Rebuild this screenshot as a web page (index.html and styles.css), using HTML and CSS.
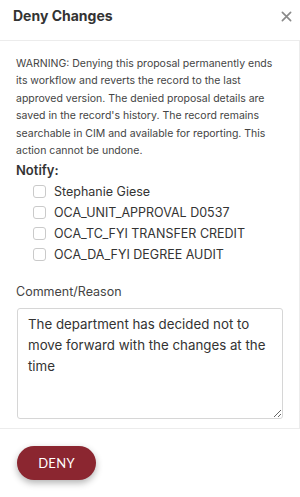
FILE: index.html
```html
<!DOCTYPE html>
<html lang="en">
<head>
  <meta charset="UTF-8" />
  <meta name="viewport" content="width=device-width, initial-scale=1.0"/>
  <title>Deny Changes</title>
  <link rel="stylesheet" href="styles.css">
</head>
<body>
<div class="modal">
  <div class="modal-header">
    <div class="modal-title">Deny Changes</div>
    <div class="close-btn">
      <svg width="11" height="11" viewBox="0 0 12 12"><path d="M1.5 1.5 L10.5 10.5 M10.5 1.5 L1.5 10.5" stroke="#8a8a8a" stroke-width="1.8" stroke-linecap="round"/></svg>
    </div>
  </div>
  <div class="modal-body">
    <p class="warning">WARNING: Denying this proposal permanently ends its workflow and reverts the record to the last approved version. The denied proposal details are saved in the record's history. The record remains searchable in CIM and available for reporting. This action cannot be undone.</p>
    <div class="notify-label">Notify:</div>
    <div class="notify-list">
      <label class="check"><span class="box"></span>Stephanie Giese</label>
      <label class="check"><span class="box"></span>OCA_UNIT_APPROVAL D0537</label>
      <label class="check"><span class="box"></span>OCA_TC_FYI TRANSFER CREDIT</label>
      <label class="check"><span class="box"></span>OCA_DA_FYI DEGREE AUDIT</label>
    </div>
    <div class="comment-label">Comment/Reason</div>
    <textarea class="comment">The department has decided not to move forward with the changes at the time</textarea>
  </div>
  <div class="modal-footer">
    <button class="deny-btn">DENY</button>
  </div>
</div>
</body>
</html>
```

FILE: styles.css
```css
body {
  margin: 0;
  background: #fff;
  font-family: 'Inter', 'Helvetica Neue', sans-serif;
  color: #333;
}
.modal {
  width: 300px;
  height: 497px;
  display: flex;
  flex-direction: column;
  overflow: hidden;
}
.modal-header {
  height: 41px;
  display: flex;
  align-items: flex-start;
  justify-content: space-between;
  padding: 7px 4px 0 13px;
  box-sizing: border-box;
  border-bottom: 1px solid #ececec;
}
.modal-title {
  font-size: 14px;
  font-weight: 700;
  color: #333;
}
.close-btn {
  width: 20px;
  height: 20px;
  display: flex;
  align-items: center;
  justify-content: center;
  margin-top: -1px;
}
.modal-body {
  height: 388px;
  flex-shrink: 0;
  box-sizing: border-box;
  padding: 14px 16px 0 16px;
  border-right: 1px solid #ececec;
  border-bottom: 1px solid #ececec;
}
.warning {
  margin: 0;
  font-size: 10.5px;
  line-height: 17.4px;
  color: #444;
}
.notify-label {
  font-size: 13px;
  font-weight: 600;
  color: #333;
  margin-top: 3px;
}
.notify-list {
  display: flex;
  flex-direction: column;
  padding-left: 17px;
  margin-top: 2px;
}
.check {
  display: flex;
  align-items: center;
  height: 21.2px;
  font-size: 12.5px;
  color: #333;
}
.box {
  width: 11px;
  height: 11px;
  border: 1px solid #cacaca;
  border-radius: 3px;
  margin-right: 8px;
  background: #fff;
}
.comment-label {
  margin-top: 19px;
  font-size: 12.5px;
  color: #444;
}
.comment {
  display: block;
  margin-top: 9px;
  margin-left: 1px;
  width: 266px;
  height: 111px;
  box-sizing: border-box;
  border: 1px solid #d6d6d6;
  border-radius: 3px;
  padding: 5px 10px;
  font-family: 'Inter', 'Helvetica Neue', sans-serif;
  font-size: 13.3px;
  line-height: 21px;
  color: #333;
  resize: vertical;
}
.modal-footer {
  flex-grow: 1;
  padding: 17px 17px;
}
.deny-btn {
  width: 79px;
  height: 34px;
  border: none;
  border-radius: 17px;
  background: #8b2630;
  color: #fff;
  font-family: 'Lato', sans-serif;
  font-size: 13px;
  letter-spacing: 0.3px;
  box-shadow: 0 3px 7px rgba(0,0,0,0.3);
  cursor: pointer;
}
```
